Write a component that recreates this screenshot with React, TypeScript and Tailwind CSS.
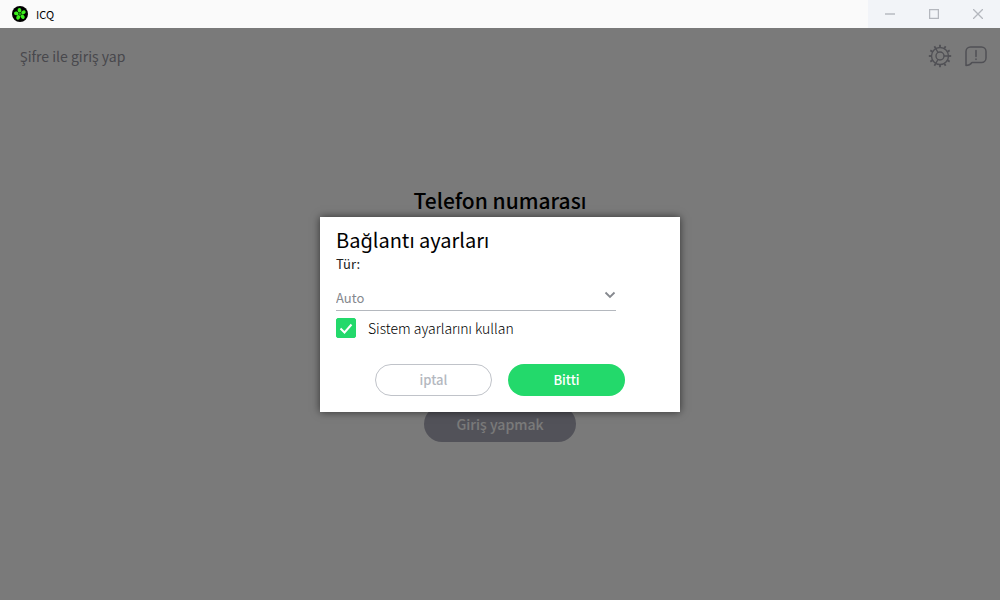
import { useState } from 'react';

const GEAR_TEETH = [0, 30, 60, 90, 120, 150, 180, 210, 240, 270, 300, 330];
const PETALS = [0, 72, 144, 216, 288];

function IcqLogo() {
  return (
    <svg viewBox="0 0 16 16" className="h-4 w-4" aria-hidden="true">
      <circle cx="8" cy="8" r="8" fill="#000000" />
      {PETALS.map((angle) => (
        <ellipse
          key={angle}
          cx="8"
          cy="4.2"
          rx="1.9"
          ry="2.3"
          fill="#3cf01e"
          transform={`rotate(${angle - 8} 8 8)`}
        />
      ))}
      <circle cx="8" cy="8" r="1.6" fill="#1f9a10" />
    </svg>
  );
}

function GearIcon() {
  return (
    <svg viewBox="0 0 24 24" className="h-6 w-6" fill="none" stroke="currentColor" strokeWidth="1.4" aria-hidden="true">
      <circle cx="12" cy="12" r="8.5" />
      <circle cx="12" cy="12" r="4" />
      {GEAR_TEETH.map((angle) => (
        <path key={angle} d="M12 3.5V.8" strokeWidth="1.8" transform={`rotate(${angle} 12 12)`} />
      ))}
      <path d="M10 8.5 7.8 4.7M16 12h4.4M10 15.5l-2.2 3.8" />
    </svg>
  );
}

function FeedbackIcon() {
  return (
    <svg viewBox="0 0 24 24" className="h-6 w-6" fill="none" stroke="currentColor" strokeWidth="1.5" strokeLinecap="round" strokeLinejoin="round" aria-hidden="true">
      <path d="M2 21.5V7.500a4.500 4.500 0 0 1 4.500-4.500h11a4.500 4.500 0 0 1 4.500 4.500v6.500a4.500 4.500 0 0 1-4.500 4.500H8c-1.500 2-3.500 3-6 3Z" />
      <path d="M12 6.500v6M12 15v.5" />
    </svg>
  );
}

function TitleBar() {
  return (
    <header className="flex h-7 items-center justify-between bg-[#fafafa]">
      <div className="flex items-center gap-2 pl-3">
        <IcqLogo />
        <span className="text-[11px] leading-4 text-black">ICQ</span>
      </div>
      <div className="flex h-full bg-[#f2f4f8] text-[#b4b7be]">
        <button type="button" aria-label="Küçült" className="flex w-11 items-center justify-center">
          <svg viewBox="0 0 10 10" className="h-2.5 w-2.5" stroke="currentColor" strokeWidth="1.4">
            <path d="M0 5h10" />
          </svg>
        </button>
        <button type="button" aria-label="Ekranı kapla" className="flex w-11 items-center justify-center">
          <svg viewBox="0 0 10 10" className="h-2.5 w-2.5" fill="none" stroke="currentColor" strokeWidth="1.3">
            <path d="M.6.6h8.800v8.800H.6z" />
          </svg>
        </button>
        <button type="button" aria-label="Kapat" className="flex w-11 items-center justify-center">
          <svg viewBox="0 0 10 10" className="h-2.5 w-2.5" stroke="currentColor" strokeWidth="1.3">
            <path d="m0 0 10 10M10 0 0 10" />
          </svg>
        </button>
      </div>
    </header>
  );
}

function LoginPage() {
  return (
    <>
      <nav className="flex h-14 items-center justify-between pr-3 pl-5 text-[#96969f]">
        <a href="#password" className="text-sm">
          Şifre ile giriş yap
        </a>
        <div className="flex gap-3 text-[#a8a8b2]">
          <button type="button" aria-label="Ayarlar">
            <GearIcon />
          </button>
          <button type="button" aria-label="Geri bildirim">
            <FeedbackIcon />
          </button>
        </div>
      </nav>
      <section className="flex flex-1 flex-col items-center justify-center gap-48 pb-14">
        <h1 className="text-[21px] leading-7 font-medium text-black">Telefon numarası</h1>
        <button type="button" className="h-9 rounded-full bg-[#acacba] px-8 text-sm font-medium text-white">
          Giriş yapmak
        </button>
      </section>
    </>
  );
}

function ConnectionDialog() {
  const [type, setType] = useState('auto');
  const [useSystem, setUseSystem] = useState(true);

  return (
    <form
      role="dialog"
      aria-labelledby="dialog-title"
      className="w-[360px] bg-white px-4 pt-[7px] pb-4 shadow-[0_0_8px_rgba(0,0,0,0.6)]"
      onSubmit={(e) => e.preventDefault()}
    >
      <h2 id="dialog-title" className="text-xl leading-8 text-black">
        Bağlantı ayarları
      </h2>
      <label htmlFor="connection-type" className="block text-[13px] leading-4 text-[#202020]">
        Tür:
      </label>
      <div className="relative mt-3 w-[280px]">
        <select
          id="connection-type"
          value={type}
          onChange={(e) => setType(e.target.value)}
          className="block h-[27px] w-full appearance-none border-b border-[#b4b8be] bg-white pt-0.5 text-[13px] text-[#85888e] outline-none"
        >
          <option value="auto">Auto</option>
          <option value="http">HTTP</option>
          <option value="socks5">SOCKS5</option>
        </select>
        <svg
          viewBox="0 0 12 8"
          className="pointer-events-none absolute top-[7px] right-0 h-2 w-3"
          fill="none"
          stroke="#85888e"
          strokeWidth="1.8"
          aria-hidden="true"
        >
          <path d="m1.500 1.500 4.500 4.500 4.500-4.500" />
        </svg>
      </div>
      <label className="mt-[7px] flex items-center gap-3 text-sm leading-5 font-light text-black">
        <span className="relative h-5 w-5">
          <input
            type="checkbox"
            checked={useSystem}
            onChange={(e) => setUseSystem(e.target.checked)}
            className="peer block h-5 w-5 appearance-none rounded-xs border border-[#b4b8be] checked:border-[#23d96b] checked:bg-[#23d96b]"
          />
          <svg
            viewBox="0 0 20 20"
            className="pointer-events-none absolute inset-0 hidden h-5 w-5 peer-checked:block"
            fill="none"
            stroke="#ffffff"
            strokeWidth="2"
            aria-hidden="true"
          >
            <path d="m4.500 10.500 4 4 7-8" />
          </svg>
        </span>
        Sistem ayarlarını kullan
      </label>
      <div className="mt-[26px] flex justify-center gap-4">
        <button type="button" className="h-8 w-[117px] rounded-full border border-[#c0c3c9] text-[13px] font-medium text-[#b4b8c0]">
          iptal
        </button>
        <button type="submit" className="h-8 w-[117px] rounded-full bg-[#23d96b] text-[13px] font-medium text-white">
          Bitti
        </button>
      </div>
    </form>
  );
}

export default function App() {
  return (
    <div className="flex min-h-screen flex-col font-['Noto_Sans_CJK_SC','Noto_Sans',sans-serif]">
      <TitleBar />
      <main className="relative flex flex-1 flex-col bg-white">
        <LoginPage />
        <div className="absolute inset-0 flex items-center justify-center bg-black/52">
          <ConnectionDialog />
        </div>
      </main>
    </div>
  );
}
